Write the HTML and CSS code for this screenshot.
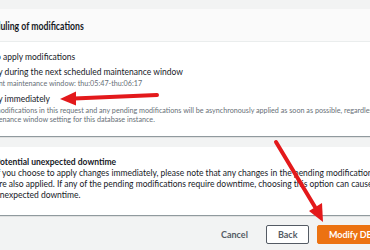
FILE: index.html
```html
<!DOCTYPE html>
<html lang="en">
<head>
    <meta charset="UTF-8">
    <meta name="viewport" content="width=device-width, initial-scale=1.0">
    <title>Modify DB instance</title>
    <link rel="stylesheet" href="styles.css">
</head>
<body>
    <div class="page">
        <div class="panel">
            <div class="panel-header">
                <h2>Scheduling of modifications</h2>
            </div>
            <div class="panel-body">
                <div class="field-label">When to apply modifications</div>
                <div class="option">
                    <span class="radio"></span>
                    <div class="option-text">
                        <div class="option-label">Apply during the next scheduled maintenance window</div>
                        <div class="option-hint">Current maintenance window: thu:05:47-thu:06:17</div>
                    </div>
                </div>
                <div class="option">
                    <span class="radio checked"></span>
                    <div class="option-text">
                        <div class="option-label">Apply immediately</div>
                        <div class="option-hint">The modifications in this request and any pending modifications will be asynchronously applied as soon as possible, regardless of the<br>maintenance window setting for this database instance.</div>
                    </div>
                </div>
            </div>
        </div>

        <div class="panel alert">
            <div class="alert-title">Potential unexpected downtime</div>
            <div class="alert-text">If you choose to apply changes immediately, please note that any changes in the pending modifications queue<br>are also applied. If any of the pending modifications require downtime, choosing this option can cause<br>unexpected downtime.</div>
        </div>

        <div class="actions">
            <button class="btn btn-link">Cancel</button>
            <button class="btn btn-normal">Back</button>
            <button class="btn btn-primary">Modify DB instance</button>
        </div>
    </div>

    <svg class="arrows" width="370" height="250" viewBox="0 0 370 250">
        <!-- arrow to "Apply immediately" -->
        <line x1="157" y1="95" x2="74" y2="98.5" stroke="#e3191b" stroke-width="4" stroke-linecap="round"/>
        <polygon points="60,99 76,91.5 76,105.5" fill="#e3191b"/>
        <!-- arrow to the submit button -->
        <line x1="276" y1="142" x2="315" y2="207" stroke="#e3191b" stroke-width="4" stroke-linecap="round"/>
        <polygon points="323,222 309,211 322,203" fill="#e3191b"/>
    </svg>
</body>
</html>
```

FILE: styles.css
```css
html, body {
    margin: 0;
    padding: 0;
}

body {
    width: 370px;
    height: 250px;
    overflow: hidden;
    background: #f2f3f3;
    font-family: Lato, "Liberation Sans", sans-serif;
    color: #16191f;
    position: relative;
}

.page {
    margin-left: -50px;
    padding-top: 9px;
    width: 700px;
}

.panel {
    background: #fff;
    box-shadow: 0 1px 1px 0 rgba(0, 28, 36, 0.3), 1px 1px 1px 0 rgba(0, 28, 36, 0.15);
}

.panel-header {
    background: #fafafa;
    border-bottom: 1px solid #eaeded;
    height: 32px;
    padding-left: 27px;
    display: flex;
    align-items: center;
}

.panel-header h2 {
    margin: 0;
    font-size: 11px;
    font-weight: 700;
    transform: scaleX(0.79);
    transform-origin: left center;
}

.panel-body {
    padding: 9px 0 7px 18px;
}

.field-label {
    font-size: 8.5px;
    line-height: 13px;
    margin-bottom: 2px;
}

.option {
    display: flex;
    gap: 2px;
}

.radio {
    width: 9px;
    height: 9px;
    border: 1px solid #687078;
    border-radius: 50%;
    margin-top: 2px;
    flex: none;
}

.option-label {
    font-size: 8.5px;
    line-height: 13px;
}

.option-hint {
    font-size: 7.2px;
    line-height: 9.5px;
    color: #687078;
    margin-bottom: 4px;
}

.alert {
    margin-top: 11px;
    padding: 10px 0 7px 45px;
    height: 51px;
}

.alert-title {
    font-size: 8.5px;
    font-weight: 700;
    line-height: 11px;
}

.alert-text {
    font-size: 8.5px;
    line-height: 11px;
}

.actions {
    display: flex;
    align-items: center;
    margin-top: 10px;
    padding-left: 260px;
}

.btn {
    font-family: Lato, "Liberation Sans", sans-serif;
    font-size: 9px;
    font-weight: 700;
    height: 19px;
    padding: 0 11px;
    border-radius: 2px;
    cursor: pointer;
}

.btn-link {
    border: none;
    background: none;
    color: #545b64;
    margin-right: 7px;
}

.btn-normal {
    background: #fff;
    border: 1px solid #545b64;
    color: #545b64;
    width: 43px;
    margin-right: 8px;
}

.btn-primary {
    background: #ec7211;
    border: 1px solid #ec7211;
    color: #fff;
}

.arrows {
    position: absolute;
    left: 0;
    top: 0;
}
```
